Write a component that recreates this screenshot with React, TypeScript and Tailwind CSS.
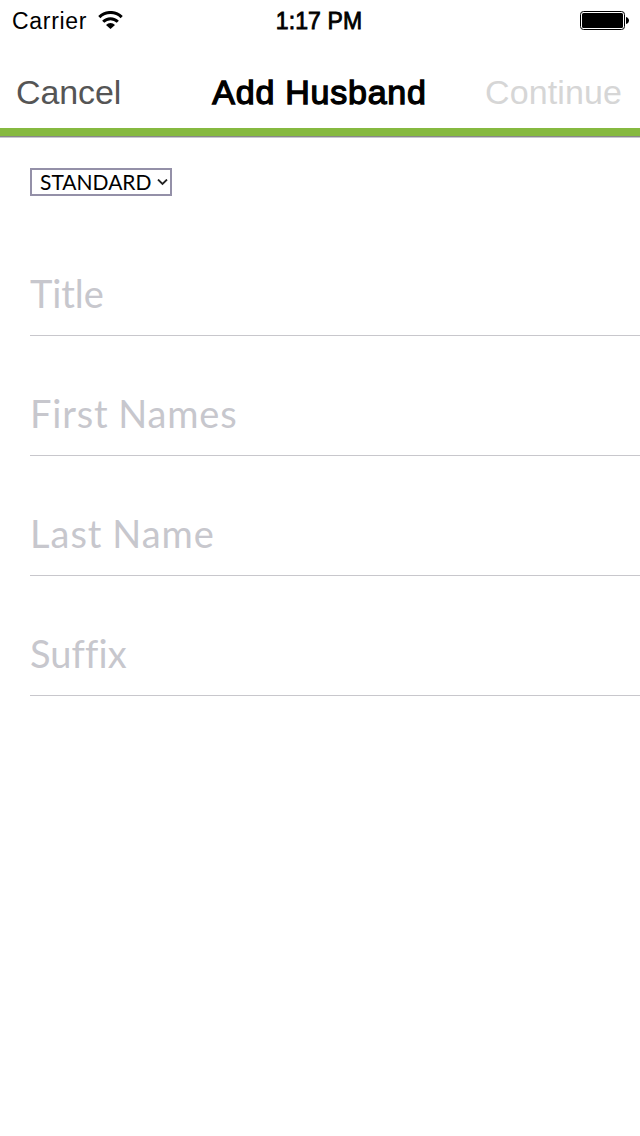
const fields = [
	{ label: 'Title', tracking: 'tracking-[-0.1px]' },
	{ label: 'First Names', tracking: 'tracking-[0.85px] [word-spacing:-1px]' },
	{ label: 'Last Name', tracking: 'tracking-[1px] [word-spacing:-1px]' },
	{ label: 'Suffix', tracking: 'tracking-[0.1px]' },
];

const StatusBar = () => (
	<div className="grid h-10 grid-cols-3 items-center pl-3 pr-[11px]">
		<div className="flex items-center gap-[11px]">
			<span className="w-[75px] whitespace-nowrap pt-[2px] text-[23px] leading-none tracking-[0.7px]">
				Carrier
			</span>
			<svg width="25" height="18" viewBox="0 0 25 18" fill="none" stroke="#000" strokeWidth="3">
				<path d="M1.3 6.1a15.8 15.8 0 0 1 22.4 0M5.2 10.8a10.2 10.2 0 0 1 14.6 0" />
				<path d="M12.5 18 8 13.9a6.4 6.4 0 0 1 9 0z" fill="#000" stroke="none" />
			</svg>
		</div>
		<span className="whitespace-nowrap pr-[3px] pt-[2px] text-center text-[23px] leading-none tracking-[0.1px] [-webkit-text-stroke:0.8px_#000]">
			1:17 PM
		</span>
		<svg className="mt-[2px] justify-self-end" width="49" height="20" viewBox="0 0 49 20">
			<rect x="0.5" y="0.5" width="44" height="18" rx="3" fill="none" stroke="#000" />
			<rect x="2" y="2" width="41" height="15" rx="1.5" />
			<path d="M46 6c4 1 4 6 0 7z" />
		</svg>
	</div>
);

const NavBar = () => (
	<header className="grid h-[88px] grid-cols-[1fr_auto_1fr] items-center pl-4 pr-[18px] pt-4 text-[34px]">
		<button className="justify-self-start tracking-[-0.1px] text-[#555]">Cancel</button>
		<h1 className="pl-px tracking-[0.75px] [-webkit-text-stroke:1.3px_#000]">Add Husband</h1>
		<button className="justify-self-end tracking-[0.1px] text-[#d6d6d6]">Continue</button>
	</header>
);

const Field = ({ label, tracking }: { label: string; tracking: string }) => (
	<div className="flex h-[120px] items-end border-b border-[#c8c7cc] pb-[13px]">
		<input
			className={`w-full font-['Lato'] text-[38px] outline-none placeholder:text-[#c7c7cd] ${tracking}`}
			placeholder={label}
		/>
	</div>
);

export default function App() {
	return (
		<div className="h-[1136px] w-[640px] bg-white font-['Liberation_Sans',sans-serif]">
			<StatusBar />
			<NavBar />
			<div className="h-2 bg-[#86b940]" />
			<div className="h-px bg-[#888]" />
			<div className="h-px bg-[#c8c8cc]" />
			<main className="pl-[30px] pt-[30px]">
				<button className="flex h-7 w-[142px] items-center justify-between border-2 border-[#9490a8] pl-2 pr-[2px] font-['Lato'] text-[21px]">
					STANDARD
					<svg width="11" height="7" viewBox="0 0 11 7" fill="none" stroke="#222" strokeWidth="1.8">
						<path d="m1 .5 4.5 4.5L10 .5" />
					</svg>
				</button>
				<div className="mt-5">
					{fields.map((field) => (
						<Field key={field.label} {...field} />
					))}
				</div>
			</main>
		</div>
	);
}
